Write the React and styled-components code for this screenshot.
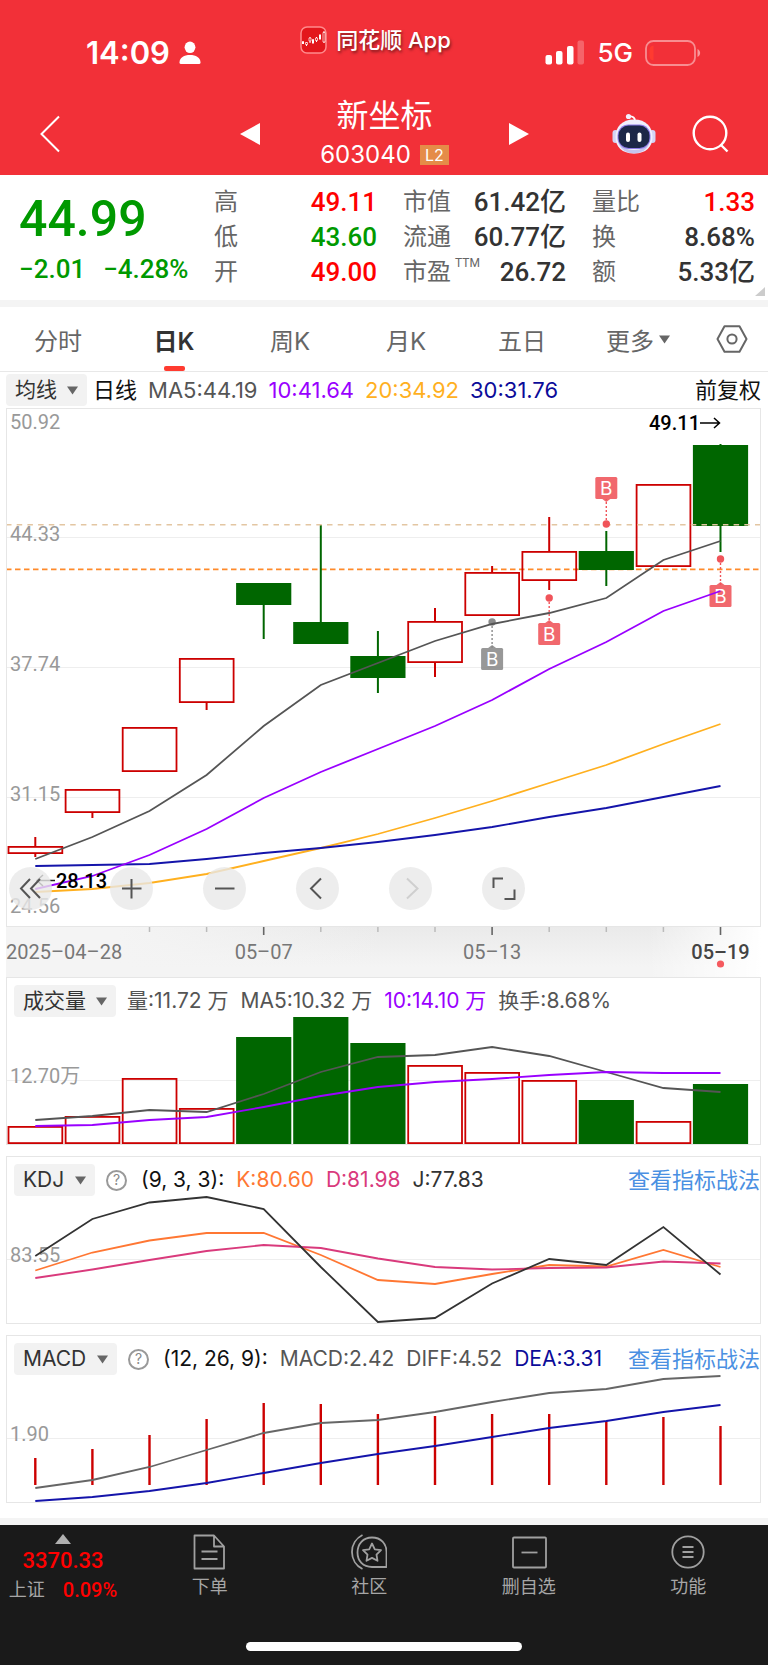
import styled, { createGlobalStyle } from "styled-components";

const RED = "#cc0000";
const GREEN = "#006600";
const STEP = 57.1;
const colX = (i) => 29.3 + i * STEP;
const toPoints = (ys) => ys.map((y, i) => `${colX(i)},${y}`).join(" ");

const stats = [
  { label: "高", value: "49.11", color: "#ff0000" },
  { label: "市值", value: "61.42亿" },
  { label: "量比", value: "1.33", color: "#ff0000" },
  { label: "低", value: "43.60", color: "#009900" },
  { label: "流通", value: "60.77亿" },
  { label: "换", value: "8.68%" },
  { label: "开", value: "49.00", color: "#ff0000" },
  { label: "市盈", sup: "TTM", value: "26.72" },
  { label: "额", value: "5.33亿" },
];

const tabs = ["分时", "日K", "周K", "月K", "五日", "更多"];

// high, body top, body bottom, low
const candles = [
  { up: true, y: [429, 438, 446, 449] },
  { up: true, y: [381, 381, 405, 410] },
  { up: true, y: [319, 319, 364, 364] },
  { up: true, y: [250, 250, 295, 302] },
  { up: false, y: [175, 175, 197, 231] },
  { up: false, y: [117, 214, 236, 236] },
  { up: false, y: [223, 248, 270, 285] },
  { up: true, y: [200, 213, 255, 269] },
  { up: true, y: [158, 164, 208, 208] },
  { up: true, y: [109, 143, 173, 182] },
  { up: false, y: [123, 143, 162, 178] },
  { up: true, y: [76, 76, 159, 159] },
  { up: false, y: [36, 37, 118, 144] },
];

const priceLines = [
  { color: "#555555", ys: [451, 429, 403, 367, 318, 277, 255, 233, 216, 205, 190, 152, 133] },
  { color: "#ffb01f", ys: [484, 481, 475, 466, 453, 440, 426, 410, 393, 375, 357, 336, 316] },
  { color: "#1414aa", ys: [458, 457, 456, 451, 445, 440, 434, 427, 419, 409, 400, 389, 378] },
  { color: "#9900ff", ys: [481, 468, 447, 421, 390, 364, 341, 318, 292, 261, 234, 203, 183] },
];

const markers = [
  { col: 8, dot: 214, box: 240, color: "#8a8a8a" },
  { col: 9, dot: 190, box: 215, color: "#f0545a" },
  { col: 10, dot: 116, box: 69, color: "#f0545a" },
  { col: 12, dot: 151, box: 177, color: "#f0545a" },
];

const volumes = [149, 139, 101, 131, 60, 40, 66, 88, 95, 103, 123, 144, 107];
const volumeLines = [
  { color: "#555555", ys: [143, 139, 133, 135, 117, 95, 80, 78, 70, 79, 95, 111, 115] },
  { color: "#9900ff", ys: [149, 148, 143, 140, 130, 119, 110, 105, 102, 98, 95, 96, 96] },
];
const kdjLines = [
  { color: "#ff7733", ys: [114.5, 96.5, 84.5, 77, 77, 99, 124, 128, 118, 109, 110.5, 94, 111] },
  { color: "#d93a7c", ys: [122, 113.5, 104, 95, 89, 92, 102.5, 111, 113.5, 112, 111.5, 105.5, 107.5] },
  { color: "#333333", ys: [100, 63, 46.5, 41, 53, 111, 166, 162, 127.5, 103, 109, 71, 118.5] },
];
const macdBars = [123, 114, 100, 84, 68, 69, 79, 81, 79, 79, 86, 82, 91];
const macdLines = [
  { color: "#666666", ys: [153, 145, 132, 115, 98, 88, 85, 77, 67, 58, 54, 44, 41] },
  { color: "#1414aa", ys: [166, 162, 156, 148, 138, 128, 119, 111, 102, 93, 86, 77, 70] },
];

const Lines = ({ data }) =>
  data.map((line, i) => (
    <polyline
      key={i}
      points={toPoints(line.ys)}
      fill="none"
      stroke={line.color}
      strokeWidth="1.8"
    />
  ));

const Bar = ({ col, top, bottom, up }) =>
  up ? (
    <rect
      x={colX(col) - 26.8}
      y={top + 0.9}
      width="53.8"
      height={bottom - top - 1.8}
      fill="none"
      stroke={RED}
      strokeWidth="1.8"
    />
  ) : (
    <rect x={colX(col) - 27.6} y={top} width="55.2" height={bottom - top} fill={GREEN} />
  );

const Candle = ({ col, up, y: [high, top, bottom, low] }) => (
  <g>
    <g stroke={up ? RED : GREEN} strokeWidth="2">
      {high < top && <line x1={colX(col)} x2={colX(col)} y1={high} y2={top} />}
      {low > bottom && <line x1={colX(col)} x2={colX(col)} y1={bottom} y2={low} />}
    </g>
    <Bar col={col} top={top} bottom={bottom} up={up} />
  </g>
);

const Marker = ({ col, dot, box, color }) => {
  const x = colX(col);
  const below = box > dot;
  const edge = below ? box : box + 22;
  const tip = below ? edge - 3 : edge + 3;
  return (
    <g fill={color}>
      <line x1={x} x2={x} y1={dot} y2={edge} stroke={color} strokeWidth="1.4" strokeDasharray="2 2" />
      <circle cx={x} cy={dot} r="3.7" />
      <g opacity="0.88">
        <rect x={x - 11} y={box} width="22" height="22" rx="1.5" />
        <path d={`M${x - 4} ${edge}L${x} ${tip}L${x + 4} ${edge}Z`} />
      </g>
      <MarkerText x={x} y={box + 18}>
        B
      </MarkerText>
    </g>
  );
};

const Caret = () => (
  <svg width="11" height="9" viewBox="0 0 11 9" aria-hidden="true">
    <path d="M0 0.5H11L5.5 8.5Z" fill="#666" />
  </svg>
);

const Picker = ({ label, value }) => (
  <Chip>
    <ChipSelect aria-label={label} defaultValue={value}>
      <option>{value}</option>
    </ChipSelect>
    <Caret />
  </Chip>
);

const StatusBar = () => (
  <Status>
    <StatusSide>
      <Time>14:09</Time>
      <svg width="22" height="24" viewBox="0 0 22 24" fill="#fff">
        <ellipse cx="11" cy="6.3" rx="5.4" ry="5.8" />
        <path d="M0.5 21.5C0.5 16.5 5 14 11 14S21.5 16.5 21.5 21.5Q21.5 23 20 23H2Q0.5 23 0.5 21.5Z" />
      </svg>
    </StatusSide>
    <AppTag>
      <svg width="27" height="28" viewBox="0 0 27 28">
        <rect x="1" y="1" width="25" height="26" rx="6" fill="#e3161c" stroke="#ff8a8c" strokeWidth="1.5" />
        <path
          d="M3 15V18M6.5 16V20M10 11V17M13 13V18M16.5 11V16M20 8V14M24 5V17"
          stroke="#fff"
          strokeWidth="1"
        />
        <path d="M2 15.5H4V18H2ZM12 13.5H14V17H12ZM19 9H21V13H19Z" fill="#fff" />
        <path
          d="M5.5 16.5H7.5V18.5H5.5ZM9 12H11V15H9ZM15.5 12H17.5V14.5H15.5ZM23 6.5H25V16H23Z"
          fill="#e3161c"
          stroke="#fff"
          strokeWidth="0.7"
        />
      </svg>
      <span>同花顺 App</span>
    </AppTag>
    <StatusSide $end>
      <svg width="40" height="25" viewBox="0 0 40 25" fill="#fff">
        <rect x="0.5" y="15" width="6.5" height="9.5" rx="2" />
        <rect x="11" y="11" width="6.5" height="13.5" rx="2" />
        <rect x="22" y="6" width="6.5" height="18.5" rx="2" />
        <rect x="32.5" y="0.5" width="6.5" height="24" rx="2" opacity="0.25" />
      </svg>
      <Network>5G</Network>
      <svg width="56" height="26" viewBox="0 0 56 26">
        <rect x="1" y="1" width="49" height="24" rx="7.5" fill="none" stroke="#fff" strokeOpacity="0.45" strokeWidth="1.8" />
        <path d="M52.5 9C56 10.5 56 15.5 52.5 17Z" fill="#fff" fillOpacity="0.5" />
        <path d="M8.5 5.5V20.5Q4.5 20 4.5 16V10Q4.5 6 8.5 5.5Z" fill="#ff3b30" />
      </svg>
    </StatusSide>
  </Status>
);

const Robot = () => (
  <svg width="44" height="42" viewBox="0 0 44 42">
    <path d="M23 8Q23 3.500 17 3.200" fill="none" stroke="#fff" strokeWidth="1.8" />
    <circle cx="16.500" cy="3.500" r="2.600" fill="#f2f0ff" />
    <rect x="0.500" y="17" width="6" height="13" rx="3" fill="#d4d3f5" />
    <rect x="37.500" y="17" width="6" height="13" rx="3" fill="#d4d3f5" />
    <path d="M22 6.500C34 6.500 40.500 14 40.500 24S34 40.500 22 40.500 3.500 34 3.500 24 10 6.500 22 6.500Z" fill="#f0effd" />
    <path d="M6 30Q11 40.500 22 40.500T38 30Q33 37 22 37T6 30Z" fill="#c6c4ee" />
    <rect x="5.500" y="11.500" width="33" height="24.500" rx="11" fill="#8d7be8" />
    <rect x="6.500" y="12.500" width="31" height="22.500" rx="10" fill="#1c2748" />
    <rect x="14" y="19.500" width="4" height="9.500" rx="2" fill="#fff" />
    <rect x="25.500" y="19.500" width="4" height="9.500" rx="2" fill="#fff" />
  </svg>
);

const NavBar = () => (
  <Nav>
    <IconButton aria-label="返回">
      <svg width="20" height="38" viewBox="0 0 20 38" fill="none" stroke="#fff" strokeWidth="2">
        <path d="M19 1.5L1.5 19L19 36.5" />
      </svg>
    </IconButton>
    <NavCenter>
      <IconButton aria-label="上一只">
        <svg width="20" height="22" viewBox="0 0 20 22">
          <path d="M20 0V22L0 11Z" fill="#fff" />
        </svg>
      </IconButton>
      <div>
        <StockName>新坐标</StockName>
        <StockCode>
          603040 <Level>L2</Level>
        </StockCode>
      </div>
      <IconButton aria-label="下一只">
        <svg width="20" height="22" viewBox="0 0 20 22">
          <path d="M0 0V22L20 11Z" fill="#fff" />
        </svg>
      </IconButton>
    </NavCenter>
    <NavEnd>
      <IconButton aria-label="智能助手">
        <Robot />
      </IconButton>
      <IconButton aria-label="搜索">
        <svg width="37" height="38" viewBox="0 0 37 38" fill="none" stroke="#fff" strokeWidth="2.4">
          <circle cx="18" cy="18" r="16.3" />
          <path d="M28.5 29.5L35.5 36.5" />
        </svg>
      </IconButton>
    </NavEnd>
  </Nav>
);

const Quote = () => (
  <QuotePanel>
    <PriceBlock>
      <Price>44.99</Price>
      <Change>
        <span>−2.01</span>
        <span>−4.28%</span>
      </Change>
    </PriceBlock>
    <Stats>
      {stats.map((item) => (
        <Stat key={item.label}>
          <StatLabel>
            {item.label}
            {item.sup && <Sup>{item.sup}</Sup>}
          </StatLabel>
          <StatValue $color={item.color}>{item.value}</StatValue>
        </Stat>
      ))}
    </Stats>
    <Corner />
  </QuotePanel>
);

const TabBar = () => (
  <Tabs>
    {tabs.map((name) => (
      <Tab key={name} $active={name === "日K"}>
        {name}
        {name === "更多" && <Caret />}
      </Tab>
    ))}
    <Tab aria-label="设置">
      <svg width="32" height="28" viewBox="0 0 32 28" fill="none" stroke="#666" strokeWidth="2">
        <path d="M8.5 1.2H23.5L30.5 14L23.5 26.8H8.5L1.5 14Z" strokeLinejoin="round" />
        <circle cx="16" cy="14" r="4.6" />
      </svg>
    </Tab>
  </Tabs>
);

const PriceChart = () => (
  <Frame>
    <Svg viewBox="1 1 753 517">
      {[129.5, 259.5, 389.5].map((y) => (
        <line key={y} x1="0" x2="755" y1={y} y2={y} stroke="#eeeeee" />
      ))}
      <AxisText x="4" y="21">50.92</AxisText>
      <AxisText x="4" y="133">44.33</AxisText>
      <AxisText x="4" y="263">37.74</AxisText>
      <AxisText x="4" y="393">31.15</AxisText>
      <AxisText x="4" y="505">24.56</AxisText>
      <line x1="0" x2="755" y1="161.3" y2="161.3" stroke="#ff8a2a" strokeWidth="1.8" strokeDasharray="5.5 3.5" />
      {candles.map((candle, i) => (
        <Candle key={i} col={i} {...candle} />
      ))}
      <line x1="0" x2="755" y1="116.8" y2="116.8" stroke="#e3c6a2" strokeWidth="1.5" strokeDasharray="5.5 5.2" />
      {markers.map((marker) => (
        <Marker key={marker.col} {...marker} />
      ))}
      <Lines data={priceLines} />
      <PeakText x="643" y="22">49.11</PeakText>
      <path d="M694 15H713M708 10L713.5 15L708 20" fill="none" stroke="#000" strokeWidth="1.5" />
      <PeakText x="50" y="480">28.13</PeakText>
      <path d="M31 472.5H49M37 467L31 472.5L37 478" fill="none" stroke="#222" strokeWidth="1.5" />
    </Svg>
    <Controls>
      <RoundButton aria-label="最早">
        <path d="M21 12L12 21.5L21 31M31 12L22 21.5L31 31" />
      </RoundButton>
      <RoundButton aria-label="放大">
        <path d="M12 21.5H31.5M21.5 12V31.5" />
      </RoundButton>
      <RoundButton aria-label="缩小">
        <path d="M12 21.5H31.5" />
      </RoundButton>
      <RoundButton aria-label="左移">
        <path d="M25 11.5L15 21.5L25 31.5" />
      </RoundButton>
      <RoundButton aria-label="右移" disabled>
        <path d="M18 11.5L28.5 21.5L18 31.5" />
      </RoundButton>
      <RoundButton aria-label="全屏">
        <path d="M21 11.5H11.5V21M22.5 32H32.5V22.5" />
      </RoundButton>
    </Controls>
  </Frame>
);

const RoundButton = ({ children, disabled, ...rest }) => (
  <Round disabled={disabled} {...rest}>
    <svg
      width="43"
      height="43"
      viewBox="0 0 43 43"
      fill="none"
      stroke={disabled ? "#cfcfcf" : "#555"}
      strokeWidth="2"
    >
      {children}
    </svg>
  </Round>
);

const DateAxis = () => (
  <DateStrip>
    <Svg viewBox="0 0 755 50">
      {[2, 3, 5, 6, 7, 9, 10, 11].map((i) => (
        <line key={i} x1={colX(i)} x2={colX(i)} y1="0" y2="5" stroke="#bbb" strokeWidth="1.5" />
      ))}
      {[4, 8, 12].map((i) => (
        <line key={i} x1={colX(i)} x2={colX(i)} y1="0" y2="8" stroke="#666" strokeWidth="1.6" />
      ))}
      <DateText x="0" y="32">2025–04–28</DateText>
      <DateText x={colX(4)} y="32" textAnchor="middle">05–07</DateText>
      <DateText x={colX(8)} y="32" textAnchor="middle">05–13</DateText>
      <DateText x={colX(12)} y="32" textAnchor="middle" $current>05–19</DateText>
      <circle cx={colX(12)} cy="37" r="3.6" fill="#f55a5f" />
    </Svg>
  </DateStrip>
);

const VolumeChart = () => (
  <Frame>
    <FrameHeader>
      <Picker label="副图一" value="成交量" />
      <Legend>
        <span>量:11.72 万</span>
        <span>MA5:10.32 万</span>
        <Ink $color="#9900ff">10:14.10 万</Ink>
        <span>换手:8.68%</span>
      </Legend>
    </FrameHeader>
    <Svg viewBox="1 1 753 166">
      <line x1="0" x2="755" y1="103.5" y2="103.5" stroke="#eeeeee" />
      <AxisText x="4" y="106">12.70万</AxisText>
      {volumes.map((top, i) => (
        <Bar key={i} col={i} top={top} bottom={167} up={candles[i].up} />
      ))}
      <Lines data={volumeLines} />
    </Svg>
  </Frame>
);

const KdjChart = () => (
  <Frame>
    <FrameHeader>
      <Picker label="副图二" value="KDJ" />
      <Help aria-label="说明">?</Help>
      <Legend>
        <Ink $color="#111">(9, 3, 3):</Ink>
        <Ink $color="#ff7733">K:80.60</Ink>
        <Ink $color="#d93a7c">D:81.98</Ink>
        <Ink $color="#333">J:77.83</Ink>
      </Legend>
      <Guide href="#kdj">查看指标战法</Guide>
    </FrameHeader>
    <Svg viewBox="1 1 753 166">
      <line x1="0" x2="755" y1="103.5" y2="103.5" stroke="#eeeeee" />
      <AxisText x="4" y="106">83.55</AxisText>
      <Lines data={kdjLines} />
    </Svg>
  </Frame>
);

const MacdChart = () => (
  <Frame>
    <FrameHeader>
      <Picker label="副图三" value="MACD" />
      <Help aria-label="说明">?</Help>
      <Legend>
        <Ink $color="#111">(12, 26, 9):</Ink>
        <span>MACD:2.42</span>
        <span>DIFF:4.52</span>
        <Ink $color="#0b0b99">DEA:3.31</Ink>
      </Legend>
      <Guide href="#macd">查看指标战法</Guide>
    </FrameHeader>
    <Svg viewBox="1 1 753 166">
      <line x1="0" x2="755" y1="103.5" y2="103.5" stroke="#eeeeee" />
      <AxisText x="4" y="106">1.90</AxisText>
      {macdBars.map((top, i) => (
        <line key={i} x1={colX(i)} x2={colX(i)} y1={top} y2="150" stroke={RED} strokeWidth="2.4" />
      ))}
      <Lines data={macdLines} />
    </Svg>
  </Frame>
);

const Footer = () => (
  <FooterWrapper>
    <FooterBar>
      <IndexBlock>
        <svg width="16" height="10" viewBox="0 0 16 10">
          <path d="M8 0L16 10H0Z" fill="#b0b0b0" />
        </svg>
        <IndexValue>3370.33</IndexValue>
        <IndexRow>
          上证 <IndexChange>0.09%</IndexChange>
        </IndexRow>
      </IndexBlock>
      <FooterItem>
        <FooterIcon viewBox="0 0 36 36">
          <path d="M4 1.5H22L32 12.5V34.5H2.5V1.5H4M22 1.5V12.5H32M9.5 17.5H25.5M9.5 25H25.5" />
        </FooterIcon>
        下单
      </FooterItem>
      <FooterItem>
        <FooterIcon viewBox="0 0 36 36">
          <path d="M11.5 1A19 19 0 0 0 11.5 35" />
          <path d="M21 3.5C30 3.5 35.5 9.5 35.5 18V33H21C12 33 6.5 27 6.5 18.5S12 3.5 21 3.5Z" />
          <path d="M21 9.5L23.8 15.3L30 16.2L25.5 20.6L26.5 26.8L21 23.9L15.5 26.8L16.5 20.6L12 16.2L18.2 15.3Z" />
        </FooterIcon>
        社区
      </FooterItem>
      <FooterItem>
        <FooterIcon viewBox="0 0 36 36">
          <rect x="2" y="3.5" width="33" height="30" rx="1" />
          <path d="M10.5 18.5H26.5" />
        </FooterIcon>
        删自选
      </FooterItem>
      <FooterItem>
        <FooterIcon viewBox="0 0 36 36">
          <circle cx="18" cy="18" r="15.7" />
          <path d="M12.5 13H23.5M12.5 18H23.5M12.5 23H23.5" />
        </FooterIcon>
        功能
      </FooterItem>
    </FooterBar>
    <HomeBar />
  </FooterWrapper>
);

const App = () => (
  <Page>
    <GlobalStyle />
    <Header>
      <StatusBar />
      <NavBar />
    </Header>
    <Quote />
    <Divider />
    <TabBar />
    <Main>
      <MaRow>
        <Picker label="主图" value="均线" />
        <Legend $large>
          <Ink $color="#111">日线</Ink>
          <span>MA5:44.19</span>
          <Ink $color="#9900ff">10:41.64</Ink>
          <Ink $color="#ffb01f">20:34.92</Ink>
          <Ink $color="#0b0b99">30:31.76</Ink>
        </Legend>
        <Adjust>前复权</Adjust>
      </MaRow>
      <PriceChart />
      <DateAxis />
      <SubCharts>
        <VolumeChart />
        <KdjChart />
        <MacdChart />
      </SubCharts>
    </Main>
    <Divider />
    <Footer />
  </Page>
);

const GlobalStyle = createGlobalStyle`
  * {
    box-sizing: border-box;
  }
  body {
    margin: 0;
    background: #fff;
    font-family: Inter, "Noto Sans CJK SC", sans-serif;
  }
  svg {
    display: block;
    flex: none;
  }
`;

const numbers = `Roboto, "Noto Sans CJK SC", sans-serif`;

const PlainButton = styled.button`
  padding: 0;
  border: 0;
  background: none;
  font-family: inherit;
  color: inherit;
  cursor: pointer;
`;

const Page = styled.div`
  min-height: 100vh;
  display: flex;
  flex-direction: column;
`;

const Header = styled.header`
  background: #f23038;
  color: #fff;
`;

const Status = styled.div`
  display: grid;
  grid-template-columns: 1fr auto 1fr;
  align-items: start;
  height: 92px;
  padding: 26px 67px 0 50px;
`;

const StatusSide = styled.div`
  display: flex;
  align-items: center;
  justify-content: ${(props) => (props.$end ? "flex-end" : "flex-start")};
  gap: ${(props) => (props.$end ? "12px" : "9px")};
  height: 53px;
  padding-left: 36px;
`;

const Time = styled.span`
  font-size: 31px;
  font-weight: 600;
`;

const Network = styled.span`
  font-size: 26px;
  font-weight: 500;
`;

const AppTag = styled.div`
  display: flex;
  align-items: center;
  gap: 9px;
  font-size: 22px;
  font-weight: 500;
  line-height: 28px;
  text-shadow: 1px 2px 3px rgba(0, 0, 0, 0.5);
`;

const Nav = styled.div`
  display: grid;
  grid-template-columns: 1fr 290px 1fr;
  align-items: center;
  height: 83px;
  padding: 0 39px 0 40px;
`;

const IconButton = styled(PlainButton)`
  display: flex;
  justify-self: start;
`;

const NavCenter = styled.div`
  display: flex;
  align-items: center;
  justify-content: space-between;
  text-align: center;
`;

const NavEnd = styled.div`
  display: flex;
  align-items: center;
  justify-content: flex-end;
  gap: 36px;
`;

const StockName = styled.h1`
  margin: 0 0 3px;
  font-size: 32px;
  font-weight: 400;
  line-height: 40px;
`;

const StockCode = styled.div`
  display: flex;
  align-items: center;
  gap: 9px;
  font-size: 24px;
  line-height: 32px;
`;

const Level = styled.span`
  width: 29px;
  background: #e58c48;
  font-size: 16px;
  line-height: 20px;
`;

const QuotePanel = styled.section`
  position: relative;
  display: flex;
  padding: 10px 13px 10px 19px;
  font-family: ${numbers};
`;

const PriceBlock = styled.div`
  width: 195px;
  color: #009900;
  font-weight: 500;
`;

const Price = styled.div`
  font-size: 50px;
  line-height: 68px;
`;

const Change = styled.div`
  display: flex;
  gap: 18px;
  font-size: 26px;
  line-height: 32px;
`;

const Stats = styled.dl`
  flex: 1;
  display: grid;
  grid-template-columns: repeat(3, 1fr);
  column-gap: 26px;
  margin: 0;
`;

const Stat = styled.div`
  display: flex;
  justify-content: space-between;
  line-height: 35px;
`;

const StatLabel = styled.dt`
  display: flex;
  font-size: 24px;
  color: #666;
`;

const Sup = styled.span`
  margin-left: 4px;
  font-size: 12px;
  line-height: 16px;
`;

const StatValue = styled.dd`
  margin: 0;
  font-size: 26px;
  font-weight: 500;
  color: ${(props) => props.$color || "#333"};
`;

const Corner = styled.span`
  position: absolute;
  right: 3px;
  bottom: 4px;
  border-left: 10px solid transparent;
  border-bottom: 9px solid #ccc;
`;

const Divider = styled.div`
  height: 7px;
  background: #f4f4f4;
`;

const Tabs = styled.nav`
  display: grid;
  grid-template-columns: repeat(6, 1fr) 72px;
  height: 65px;
  border-bottom: 1px solid #e8e8e8;
`;

const Tab = styled(PlainButton)`
  position: relative;
  display: flex;
  align-items: center;
  justify-content: center;
  gap: 5px;
  font-size: 24px;
  font-weight: ${(props) => (props.$active ? 600 : 400)};
  color: ${(props) => (props.$active ? "#333" : "#666")};

  &::after {
    content: "";
    display: ${(props) => (props.$active ? "block" : "none")};
    position: absolute;
    bottom: 0;
    width: 21px;
    height: 5px;
    border-radius: 2px;
    background: #ff3b30;
  }
`;

const Main = styled.main`
  padding: 0 7px 15px 6px;
`;

const MaRow = styled.div`
  display: flex;
  align-items: center;
  gap: 6px;
  height: 36px;
`;

const Chip = styled.label`
  display: flex;
  align-items: center;
  gap: 10px;
  height: 32px;
  padding: 0 9px;
  border-radius: 4px;
  background: #f2f2f2;
`;

const ChipSelect = styled.select`
  appearance: none;
  padding: 0;
  border: 0;
  background: none;
  font-family: inherit;
  font-size: 21px;
  line-height: 30px;
  color: #333;
`;

const Legend = styled.div`
  display: flex;
  align-items: baseline;
  gap: ${(props) => (props.$large ? "11px" : "12px")};
  font-size: ${(props) => (props.$large ? "22px" : "21px")};
  line-height: 32px;
  color: #555;
  white-space: nowrap;
`;

const Ink = styled.span`
  color: ${(props) => props.$color};
`;

const Adjust = styled.span`
  margin-left: auto;
  font-size: 22px;
  line-height: 32px;
  color: #111;
`;

const Frame = styled.section`
  position: relative;
  border: 1px solid #e6e6e6;
`;

// the legend floats over the top of the chart area
const FrameHeader = styled.div`
  position: absolute;
  top: 7px;
  left: 7px;
  right: 0;
  display: flex;
  align-items: center;
  gap: 11px;
`;

const Help = styled(PlainButton)`
  width: 21px;
  height: 21px;
  margin-right: 3px;
  border: 2px solid #999;
  border-radius: 50%;
  font-size: 14px;
  line-height: 16px;
  color: #888;
`;

const Guide = styled.a`
  margin-left: auto;
  font-size: 22px;
  line-height: 32px;
  color: #4a90e2;
  text-decoration: none;
  white-space: nowrap;
`;

const Svg = styled.svg`
  width: 100%;
  height: auto;
`;

const AxisText = styled.text`
  font-family: ${numbers};
  font-size: 20px;
  fill: #999;
`;

const PeakText = styled.text`
  font-family: ${numbers};
  font-size: 20px;
  font-weight: 500;
  fill: #000;
`;

const MarkerText = styled.text`
  font-size: 19px;
  fill: #fff;
  text-anchor: middle;
`;

const DateText = styled.text`
  font-family: ${numbers};
  font-size: 20px;
  font-weight: ${(props) => (props.$current ? 500 : 400)};
  fill: ${(props) => (props.$current ? "#444" : "#777")};
`;

const DateStrip = styled.div`
  background: linear-gradient(90deg, rgba(255, 255, 255, 0) 85%, #fff),
    linear-gradient(90deg, #f4f4f4 15%, rgba(244, 244, 244, 0) 50%),
    linear-gradient(#eaeaea, #f4f4f4 80%);
`;

const Controls = styled.div`
  position: absolute;
  left: 2px;
  bottom: 16px;
  display: flex;
  gap: 50px;
`;

const Round = styled(PlainButton)`
  width: 43px;
  height: 43px;
  border-radius: 50%;
  background: rgba(232, 232, 232, 0.8);

  &:first-child {
    margin-right: 8px;
  }
`;

const SubCharts = styled.div`
  display: flex;
  flex-direction: column;
  gap: 11px;
`;

const FooterWrapper = styled.footer`
  flex: 1;
  display: flex;
  flex-direction: column;
  justify-content: space-between;
  align-items: center;
  min-height: 139px;
  padding: 9px 0 14px;
  background: #1a1a1a;
  color: #a6a6a6;
`;

const FooterBar = styled.nav`
  display: grid;
  grid-template-columns: 130px repeat(4, 1fr);
  width: 100%;
`;

const IndexBlock = styled.div`
  display: flex;
  flex-direction: column;
  align-items: center;
  padding-right: 4px;
  font-size: 18px;
`;

const IndexValue = styled.span`
  font-family: ${numbers};
  font-size: 22px;
  font-weight: 500;
  line-height: 34px;
  color: #ff0000;
`;

const IndexRow = styled.div`
  display: flex;
  align-items: center;
  gap: 18px;
  line-height: 24px;
`;

const IndexChange = styled.span`
  font-family: ${numbers};
  font-size: 20px;
  font-weight: 500;
  color: #ff0000;
`;

const FooterItem = styled(PlainButton)`
  display: flex;
  flex-direction: column;
  align-items: center;
  gap: 4px;
  font-size: 18px;
  line-height: 26px;
`;

const FooterIcon = styled.svg`
  width: 36px;
  height: 36px;
  fill: none;
  stroke: #a0a0a0;
  stroke-width: 1.8;
  stroke-linejoin: round;
`;

const HomeBar = styled.div`
  width: 276px;
  height: 9px;
  border-radius: 5px;
  background: #fff;
`;

export default App;
